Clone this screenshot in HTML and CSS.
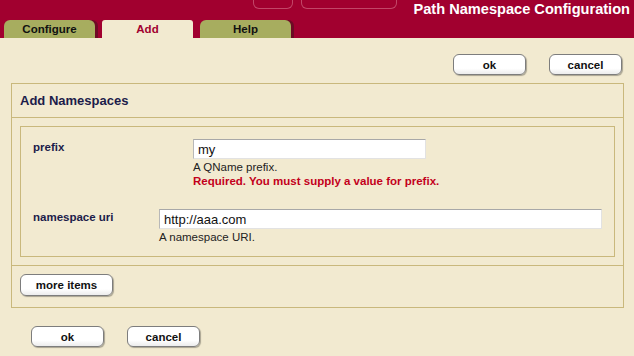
FILE: index.html
```html
<!DOCTYPE html>
<html>
<head>
<meta charset="utf-8">
<title>Path Namespace Configuration</title>
<link rel="stylesheet" href="styles.css">
</head>
<body>
<header class="topbar">
  <div class="top-row">
    <div class="ghosts">
      <span class="ghost ghost-a"></span>
      <span class="ghost ghost-b"></span>
    </div>
    <h1 class="title">Path Namespace Configuration</h1>
  </div>
  <nav class="tabs">
    <a class="tab">Configure</a>
    <a class="tab tab-active">Add</a>
    <a class="tab">Help</a>
  </nav>
</header>
<main class="page">
  <div class="actions actions-top">
    <button class="btn">ok</button>
    <button class="btn">cancel</button>
  </div>
  <section class="panel">
    <h2 class="panel-title">Add Namespaces</h2>
    <div class="panel-body">
      <div class="fields">
        <div class="field field-prefix">
          <label class="field-label">prefix</label>
          <div class="field-control">
            <input class="text-input input-short" type="text" value="my">
            <div class="hint">A QName prefix.</div>
            <div class="error">Required. You must supply a value for prefix.</div>
          </div>
        </div>
        <div class="field field-uri">
          <label class="field-label">namespace uri</label>
          <div class="field-control">
            <input class="text-input input-long" type="text" value="http://aaa.com">
            <div class="hint">A namespace URI.</div>
          </div>
        </div>
      </div>
    </div>
    <div class="panel-footer">
      <button class="btn btn-wide">more items</button>
    </div>
  </section>
  <div class="actions actions-bottom">
    <button class="btn">ok</button>
    <button class="btn">cancel</button>
  </div>
</main>
</body>
</html>
```
FILE: styles.css
```css
html, body {
  margin: 0;
  padding: 0;
}
body {
  background: #f2ead0;
  font-family: "Liberation Sans", Arial, sans-serif;
  font-size: 11.5px;
  color: #1a1a1a;
  width: 634px;
  height: 356px;
  overflow: hidden;
}
.topbar {
  background: #a1002f;
  height: 38px;
  display: flex;
  flex-direction: column;
}
.top-row {
  height: 20px;
  display: flex;
  align-items: flex-start;
}
.ghosts {
  display: flex;
  gap: 8px;
  margin-left: 253px;
}
.ghost {
  display: block;
  height: 8px;
  border: 1px solid rgba(255, 200, 210, 0.35);
  border-top: none;
  border-radius: 0 0 6px 6px;
}
.ghost-a { width: 38px; }
.ghost-b { width: 94px; }
.title {
  margin: 0 4px 0 auto;
  font-size: 14.6px;
  line-height: 18px;
  font-weight: bold;
  color: #ffffff;
}
.tabs {
  display: flex;
  gap: 7px;
  padding-left: 4px;
  height: 18px;
}
.tab {
  width: 91px;
  height: 18px;
  line-height: 19px;
  text-align: center;
  font-weight: bold;
  font-size: 11.5px;
  color: #111;
  background: #a7ad5f;
  border-radius: 6px 6px 0 0;
  box-shadow: 3px 0 0 #6e0a25;
  cursor: pointer;
}
.tab-active {
  background: #f2ead0;
  color: #a1002f;
  border-radius: 3px 3px 0 0;
  box-shadow: none;
}
.page {
  padding-top: 16px;
}
.actions {
  display: flex;
  gap: 23px;
}
.actions-top {
  justify-content: flex-end;
  padding-right: 12px;
}
.actions-bottom {
  padding-left: 31px;
  margin-top: 18px;
}
.btn {
  width: 73px;
  height: 21px;
  padding: 0;
  background: linear-gradient(#ffffff 70%, #ececec);
  border: 1px solid #7d7d7d;
  border-radius: 6px;
  box-shadow: 1px 1px 1px rgba(0, 0, 0, 0.3);
  font-family: "Liberation Sans", Arial, sans-serif;
  font-size: 11.5px;
  font-weight: bold;
  color: #111;
}
.btn-wide {
  width: 93px;
  height: 22px;
}
.panel {
  margin: 8px 10px 0 11px;
  border: 1px solid #c9b87c;
}
.panel-title {
  margin: 0;
  padding: 0 8px;
  height: 33px;
  line-height: 34px;
  font-size: 13px;
  font-weight: bold;
  color: #1c1c4a;
  border-bottom: 1px solid #c9b87c;
}
.panel-body {
  padding: 8px;
  border-bottom: 1px solid #c9b87c;
}
.fields {
  border: 1px solid #c9b87c;
  padding: 12px;
  display: flex;
  flex-direction: column;
  gap: 21px;
}
.field {
  display: grid;
}
.field-prefix {
  grid-template-columns: 160px 1fr;
}
.field-uri {
  grid-template-columns: 126px 1fr;
}
.field-label {
  font-weight: bold;
  color: #1c1c4a;
  line-height: 14px;
  padding-top: 1px;
}
.text-input {
  display: block;
  box-sizing: border-box;
  height: 20px;
  margin: 0;
  padding: 0 4px;
  background: #ffffff;
  border: 1px solid;
  border-color: #a8a8a8 #e2e2e2 #e2e2e2 #b8b8b8;
  font-family: "Liberation Sans", Arial, sans-serif;
  font-size: 13px;
  color: #111;
}
.input-short { width: 233px; }
.input-long { width: 443px; }
.hint {
  line-height: 14px;
  margin-top: 1px;
  color: #222;
}
.error {
  line-height: 14px;
  font-weight: bold;
  color: #c3001b;
}
.panel-footer {
  padding: 8px 8px 11px 8px;
}
```
